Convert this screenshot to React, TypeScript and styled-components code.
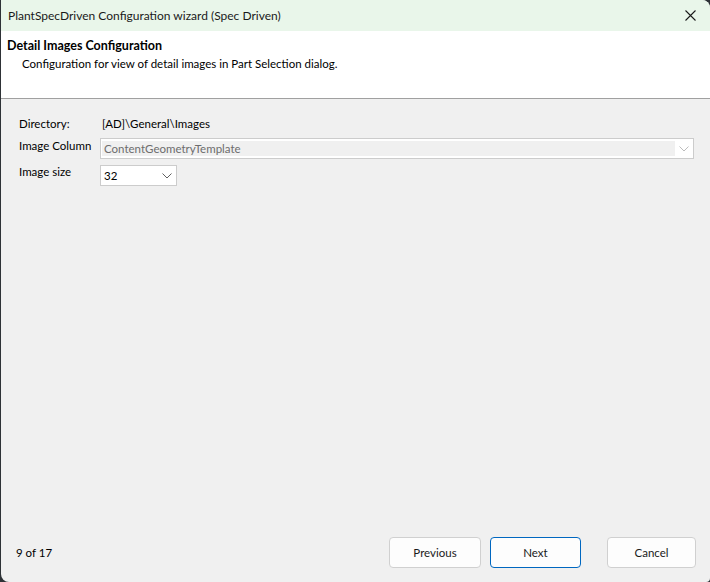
import React from 'react';
import styled, { createGlobalStyle } from 'styled-components';

const GlobalStyle = createGlobalStyle`
  html, body {
    margin: 0;
    padding: 0;
    background: #2e3236;
    width: 710px;
    height: 582px;
    overflow: hidden;
  }
  * { box-sizing: border-box; }
`;

const Window = styled.div`
  width: 709px;
  height: 582px;
  margin-left: 1px;
  display: flex;
  flex-direction: column;
  background: #f0f0f0;
  border-radius: 0 8px 4px 8px;
  overflow: hidden;
  font-family: Lato, "Noto Sans", sans-serif;
  font-size: 11.5px;
  color: #000;
`;

const TitleBar = styled.div`
  height: 31px;
  flex: 0 0 31px;
  background: #e9f6ea;
  display: flex;
  align-items: center;
  justify-content: space-between;
  padding-left: 7px;
`;

const TitleText = styled.span`
  font-size: 12px;
  color: #1a1a1a;
`;

const CloseBtn = styled.div`
  width: 46px;
  height: 31px;
  display: flex;
  align-items: center;
  justify-content: center;
  padding-left: 6px;
`;

const Header = styled.div`
  height: 68px;
  flex: 0 0 68px;
  background: #fff;
  border-bottom: 1px solid #a0a0a0;
  padding: 7px 6px 0;
`;

const HeaderTitle = styled.div`
  font-weight: 700;
  font-size: 12.5px;
  line-height: 16px;
`;

const HeaderDesc = styled.div`
  padding-left: 15px;
  line-height: 16px;
  margin-top: 2px;
`;

const Body = styled.div`
  flex: 1;
  display: flex;
  flex-direction: column;
  padding: 17px 14px 14px 18px;
`;

const Form = styled.div`
  display: grid;
  grid-template-columns: 81px 1fr;
  row-gap: 6px;
  align-items: center;
  padding-right: 2px;
`;

const Label = styled.div<{ $up?: boolean; $shift?: number }>`
  line-height: 16px;
  white-space: nowrap;
  align-self: ${(p) => (p.$up ? 'start' : 'center')};
  margin-top: ${(p) => p.$shift ?? 0}px;
`;

const Value = styled.div`
  padding-left: 2px;
  line-height: 16px;
`;

const Combo = styled.div<{ $disabled?: boolean; $width?: string }>`
  width: ${(p) => p.$width || '100%'};
  height: 21px;
  border: 1px solid #cccccc;
  background: #fff;
  display: flex;
  align-items: stretch;
  color: ${(p) => (p.$disabled ? '#6d6d6d' : '#000')};
`;

const ComboText = styled.div<{ $disabled?: boolean }>`
  flex: 1;
  display: flex;
  align-items: center;
  padding-left: 2px;
  margin: 2px 0 2px 1px;
  background: ${(p) => (p.$disabled ? '#f0f0f0' : '#fff')};
`;

const Chevron = styled.div`
  width: 18px;
  display: flex;
  align-items: center;
  justify-content: center;
`;

const Spacer = styled.div`
  flex: 1;
`;

const Footer = styled.div`
  display: flex;
  align-items: center;
  margin-left: -3px;
`;

const PageInfo = styled.div`
  flex: 1;
`;

const Button = styled.div<{ $primary?: boolean; $gap?: number; $w: number }>`
  width: ${(p) => p.$w}px;
  height: 31px;
  margin-left: ${(p) => p.$gap ?? 0}px;
  border: 1px solid ${(p) => (p.$primary ? '#0067c0' : '#d0d0d0')};
  border-radius: 4px;
  background: #fdfdfd;
  display: flex;
  align-items: center;
  justify-content: center;
  color: #1a1a1a;
`;

const ChevronIcon = ({ color }: { color: string }) => (
  <svg width="10" height="6" viewBox="0 0 10 6">
    <path d="M0.5 0.5 L5 5 L9.5 0.5" fill="none" stroke={color} strokeWidth="1" />
  </svg>
);

export default function App() {
  return (
    <>
      <GlobalStyle />
      <Window>
        <TitleBar>
          <TitleText>PlantSpecDriven Configuration wizard (Spec Driven)</TitleText>
          <CloseBtn>
            <svg width="11" height="11" viewBox="0 0 11 11">
              <path d="M0.5 0.5 L10.5 10.5 M10.5 0.5 L0.5 10.5" stroke="#1a1a1a" strokeWidth="1.1" />
            </svg>
          </CloseBtn>
        </TitleBar>
        <Header>
          <HeaderTitle>Detail Images Configuration</HeaderTitle>
          <HeaderDesc>Configuration for view of detail images in Part Selection dialog.</HeaderDesc>
        </Header>
        <Body>
          <Form>
            <Label>Directory:</Label>
            <Value>[AD]\General\Images</Value>
            <Label $up>Image Column</Label>
            <Combo $disabled>
              <ComboText $disabled>ContentGeometryTemplate</ComboText>
              <Chevron>
                <ChevronIcon color="#bcbcbc" />
              </Chevron>
            </Combo>
            <Label $up $shift={-1}>Image size</Label>
            <Combo $width="77px">
              <ComboText>32</ComboText>
              <Chevron>
                <ChevronIcon color="#606060" />
              </Chevron>
            </Combo>
          </Form>
          <Spacer />
          <Footer>
            <PageInfo>9 of 17</PageInfo>
            <Button $w={92}>Previous</Button>
            <Button $w={91} $primary $gap={9}>Next</Button>
            <Button $w={89} $gap={26}>Cancel</Button>
          </Footer>
        </Body>
      </Window>
    </>
  );
}
